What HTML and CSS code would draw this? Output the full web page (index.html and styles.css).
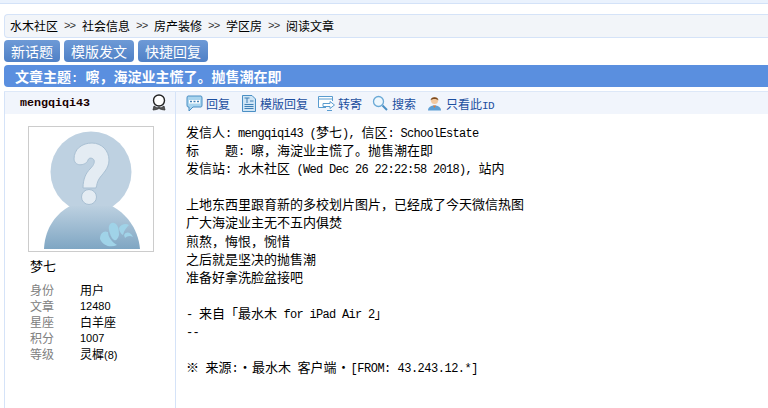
FILE: index.html
```html
<!DOCTYPE html>
<html lang="zh-CN">
<head>
    <meta charset="UTF-8">
    <title>阅读文章</title>
    <link rel="stylesheet" href="styles.css">
</head>
<body>

    <div class="top-strip"></div>

    <!-- Breadcrumb -->
    <div class="crumbs">
        <span>水木社区</span><span class="sep">&gt;&gt;</span><span>社会信息</span><span class="sep">&gt;&gt;</span><span>房产装修</span><span class="sep">&gt;&gt;</span><span>学区房</span><span class="sep">&gt;&gt;</span><span>阅读文章</span>
    </div>

    <div class="buttons">
        <a class="btn btn-short">新话题</a>
        <a class="btn">模版发文</a>
        <a class="btn">快捷回复</a>
    </div>

    <div class="title-bar">文章主题<span class="title-en">: </span>嚓&#xFF0C;海淀业主慌了。抛售潮在即</div>

    <!-- Post -->
    <div class="post">
        <div class="author">
            <div class="author-head">
                <span class="username">mengqiqi43</span>
                <svg class="medal" width="16" height="18" viewBox="0 0 16 18">
                    <circle cx="8" cy="6.500" r="5.500" fill="#fff" stroke="#222" stroke-width="1.400"/>
                    <path d="M3 12 L6 14 L8 13 L10 14 L13 12 L14 16 L10.500 15.500 L8 14.500 L5.500 15.500 L2 16 Z" fill="#555" stroke="#333" stroke-width="0.800"/>
                </svg>
            </div>
            <div class="avatar">
                <svg width="124" height="124" viewBox="0 0 124 124">
                    <defs>
                        <linearGradient id="bodyfill" x1="0" y1="0" x2="0" y2="1">
                            <stop offset="0" stop-color="#bcd0e0"/>
                            <stop offset="1" stop-color="#7fa6c3"/>
                        </linearGradient>
                    </defs>
                    <circle cx="62" cy="45" r="40.500" fill="#bed1e1"/>
                    <path d="M15 122 C16 100 28 86 41 79 L83 79 C96 86 109 100 111 122 Z" fill="url(#bodyfill)"/>
                    <path d="M45 32 C45 22 53 16 63 16 C73 16 80 24 80 33 C80 42 73 47 70 52 C68 55 68 58 67 61 L54 61 C54 52 57 46 61 42 C64 39 66 36 65 33 C64 31 60 30 59 33 C58 38 46 41 45 32 Z" fill="#e4ecf3" stroke="#a9c0d3"/>
                    <circle cx="60" cy="70" r="7.500" fill="#e4ecf3" stroke="#a9c0d3"/>
                    <g fill="#a0d3e8">
                        <path d="M71 112 C71 106 75 103 79 105 C79 110 83 115 88 118 C82 121 74 119 71 112 Z"/>
                        <path d="M80 103 C79 98 82 95 85 96 C89 97 90 102 90 108 C89 112 87 114 85 113 C82 111 81 107 80 103 Z"/>
                        <path d="M90 101 C92 97 97 96 100 98 C98 100 95 103 94 108 C92 107 90 104 90 101 Z"/>
                        <path d="M95 108 C97 104 102 105 104 110 C101 108 98 109 96 111 Z"/>
                    </g>
                </svg>
            </div>
            <div class="nick">梦七</div>
            <dl class="stats">
                <div><dt>身份</dt><dd>用户</dd></div>
                <div><dt>文章</dt><dd class="num">12480</dd></div>
                <div><dt>星座</dt><dd>白羊座</dd></div>
                <div><dt>积分</dt><dd class="num">1007</dd></div>
                <div><dt>等级</dt><dd>灵樨<span class="num">(8)</span></dd></div>
            </dl>
        </div>

        <div class="content">
            <div class="actions">
                <a class="action">
                    <svg width="17" height="17" viewBox="0 0 17 17">
                        <path d="M2 1 H15 Q16 1 16 3 V10 Q16 12 15 12 H7 L3 16 V12 H2 Q1 12 1 10 V3 Q1 1 2 1 Z" fill="#a9d4ee" stroke="#4a8fc4"/>
                        <rect x="3" y="5" width="11" height="3.500" fill="#fff"/>
                        <path d="M4 6.500 H6 M7.500 6.500 H9.500 M11 6.500 H13" stroke="#3f7fb5" stroke-width="1.400"/>
                    </svg>回复</a>
                <a class="action">
                    <svg width="17" height="17" viewBox="0 0 17 17">
                        <path d="M2.500 .5 H12 L15.500 4 V16.500 H2.500 Z" fill="#cfe5f5" stroke="#4a8fc4"/>
                        <path d="M4.500 3 H9.500 M7 3 V8 M10 6 H13.500 M4.500 9.500 H13.500 M4.500 11.500 H13.500 M4.500 13.500 H13.500" stroke="#3f7fb5"/>
                    </svg>模版回复</a>
                <a class="action">
                    <svg width="17" height="17" viewBox="0 0 17 17">
                        <path d="M8 12.500 H.5 V1.500 H14.500 V6" fill="#fff" stroke="#5a9ccf"/>
                        <path d="M.5 4 H14.500" stroke="#5a9ccf"/>
                        <path d="M5 8.500 H12 L12 6.500 L16.500 10 L12 13.500 V11.500 H5 Z" fill="#fff" stroke="#5a9ccf"/>
                        <path d="M9 15.500 H14" stroke="#5a9ccf"/>
                    </svg>转寄</a>
                <a class="action">
                    <svg width="17" height="17" viewBox="0 0 17 17">
                        <circle cx="6.500" cy="6.500" r="5" fill="#eef7fd" stroke="#6aa9d6" stroke-width="1.300"/>
                        <path d="M10.500 10.500 L15 15" stroke="#4a8fc4" stroke-width="2"/>
                    </svg>搜索</a>
                <a class="action">
                    <svg width="17" height="17" viewBox="0 0 17 17">
                        <path d="M2 15.500 C2 12 5 10.500 8.500 10.500 C12 10.500 15 12 15 15.500 Z" fill="#5f9fd4"/>
                        <circle cx="8.500" cy="5.500" r="3.500" fill="#f3c9a0"/>
                        <path d="M4.500 5.500 C4.500 1 12.500 1 12.500 5.500 C11 3.500 6 3.500 4.500 5.500 Z" fill="#7a4a20"/>
                        <path d="M7 10.500 H10 L8.500 13 Z" fill="#e8792b"/>
                    </svg><span>只看此<span class="id">ID</span></span></a>
            </div>

            <pre class="body-text">发信人<span class="en">: mengqiqi43 (</span>梦七<span class="en">), </span>信区<span class="en">: SchoolEstate</span>
标<span class="en">    </span>题<span class="en">: </span>嚓&#xFF0C;海淀业主慌了。抛售潮在即
发信站<span class="en">: </span>水木社区<span class="en"> (Wed Dec 26 22:22:58 2018), </span>站内

上地东西里跟育新的多校划片图片&#xFF0C;已经成了今天微信热图
广大海淀业主无不五内俱焚
煎熬&#xFF0C;悔恨&#xFF0C;惋惜
之后就是坚决的抛售潮
准备好拿洗脸盆接吧

<span class="en">- </span>来自「最水木<span class="en"> for iPad Air 2</span>」
<span class="en">--</span>

※<span class="en"> </span>来源<span class="en">:</span><span class="dot">·</span>最水木<span class="en"> </span>客户端<span class="dot">·</span><span class="en from">[FROM: 43.243.12.*]</span></pre>
        </div>
    </div>

</body>
</html>
```

FILE: styles.css
```css
html,
body {
    margin: 0;
    padding: 0;
    height: 408px;
    overflow: hidden;
}

body {
    background-color: #ffffff;
    font-family: "Noto Sans CJK SC", "Liberation Sans", sans-serif;
    color: #000000;
    padding: 0 0 0 4px;
    box-sizing: border-box;
}

a {
    text-decoration: none;
}

.top-strip {
    height: 3px;
    margin-left: -4px;
    background-color: #eaf2fd;
    border-bottom: 1px solid #d3e2f8;
    margin-bottom: 10px;
}

.crumbs {
    height: 22px;
    line-height: 22px;
    background-color: #f2f5f9;
    border: 1px solid #d5e3f8;
    border-right: none;
    border-radius: 4px 0 0 4px;
    padding-left: 5px;
    font-size: 12px;
    display: flex;
}

.crumbs .sep {
    font-family: "Liberation Mono", monospace;
    font-size: 11px;
    letter-spacing: -1px;
    width: 11px;
    margin: 0 7px 0 6px;
    color: #333333;
}

.buttons {
    display: flex;
    gap: 4px;
    margin-top: 2px;
    height: 22px;
}

.btn {
    width: 70px;
    height: 22px;
    line-height: 22px;
    text-align: center;
    border-radius: 4px;
    background: linear-gradient(#6e9ad6, #4f80c6);
    color: #ffffff;
    font-size: 14px;
}

.btn-short {
    width: 56px;
}

.title-bar {
    height: 22px;
    line-height: 22px;
    margin-top: 3px;
    padding-left: 11px;
    background-color: #5a8fdf;
    border-radius: 4px 0 0 4px;
    color: #ffffff;
    font-size: 14px;
    font-weight: bold;
}

.title-en {
    font-family: "Liberation Mono", monospace;
    font-size: 12px;
    white-space: pre;
}

.post {
    display: flex;
    margin-top: 4px;
    border-top: 1px solid #dde8f8;
    height: 316px;
}

.author {
    width: 170px;
    flex: none;
    border-left: 1px solid #d5e3f8;
    border-right: 1px solid #d5e3f8;
}

.author-head {
    height: 22px;
    background-color: #f1f5fc;
    display: flex;
    align-items: center;
    justify-content: space-between;
    padding: 0 8px 0 15px;
}

.username {
    font-family: "Liberation Mono", monospace;
    font-size: 11.700px;
    font-weight: bold;
    color: #1a0000;
}

.avatar {
    width: 124px;
    height: 124px;
    margin: 12px 0 0 23px;
    border: 1px solid #cccccc;
}

.avatar svg {
    display: block;
}

.nick {
    margin: 5px 0 0 25px;
    font-size: 13px;
    line-height: 18px;
}

.stats {
    margin: 7px 0 0 25px;
    font-size: 12px;
    line-height: 16px;
}

.stats div {
    display: flex;
}

.stats dt {
    width: 50px;
    color: #808080;
}

.stats dd {
    margin: 0;
}

.num {
    font-family: "Liberation Sans", sans-serif;
    font-size: 11px;
}

.content {
    flex: 1;
}

.actions {
    height: 22px;
    background-color: #f1f5fc;
    display: flex;
    align-items: center;
    gap: 10px;
    padding-left: 10px;
}

.action {
    display: flex;
    align-items: center;
    gap: 3px;
    font-size: 12px;
    color: #1c4f9f;
}

.action svg {
    flex: none;
}

.action .id {
    font-family: "Liberation Mono", monospace;
    font-size: 11px;
    letter-spacing: -0.600px;
}

.body-text {
    margin: 9px 0 0 10px;
    font-family: "Noto Sans CJK SC", sans-serif;
    font-size: 13px;
    line-height: 18.100px;
}

/* latin runs are half the width of the chinese, like a bitmap song font */
.en {
    font-family: "Liberation Mono", monospace;
    font-size: 12px;
    letter-spacing: -0.700px;
    line-height: 0;
}

.from {
    letter-spacing: -0.500px;
}

.dot {
    display: inline-block;
    width: 14px;
    line-height: 0;
    text-align: center;
}
```
